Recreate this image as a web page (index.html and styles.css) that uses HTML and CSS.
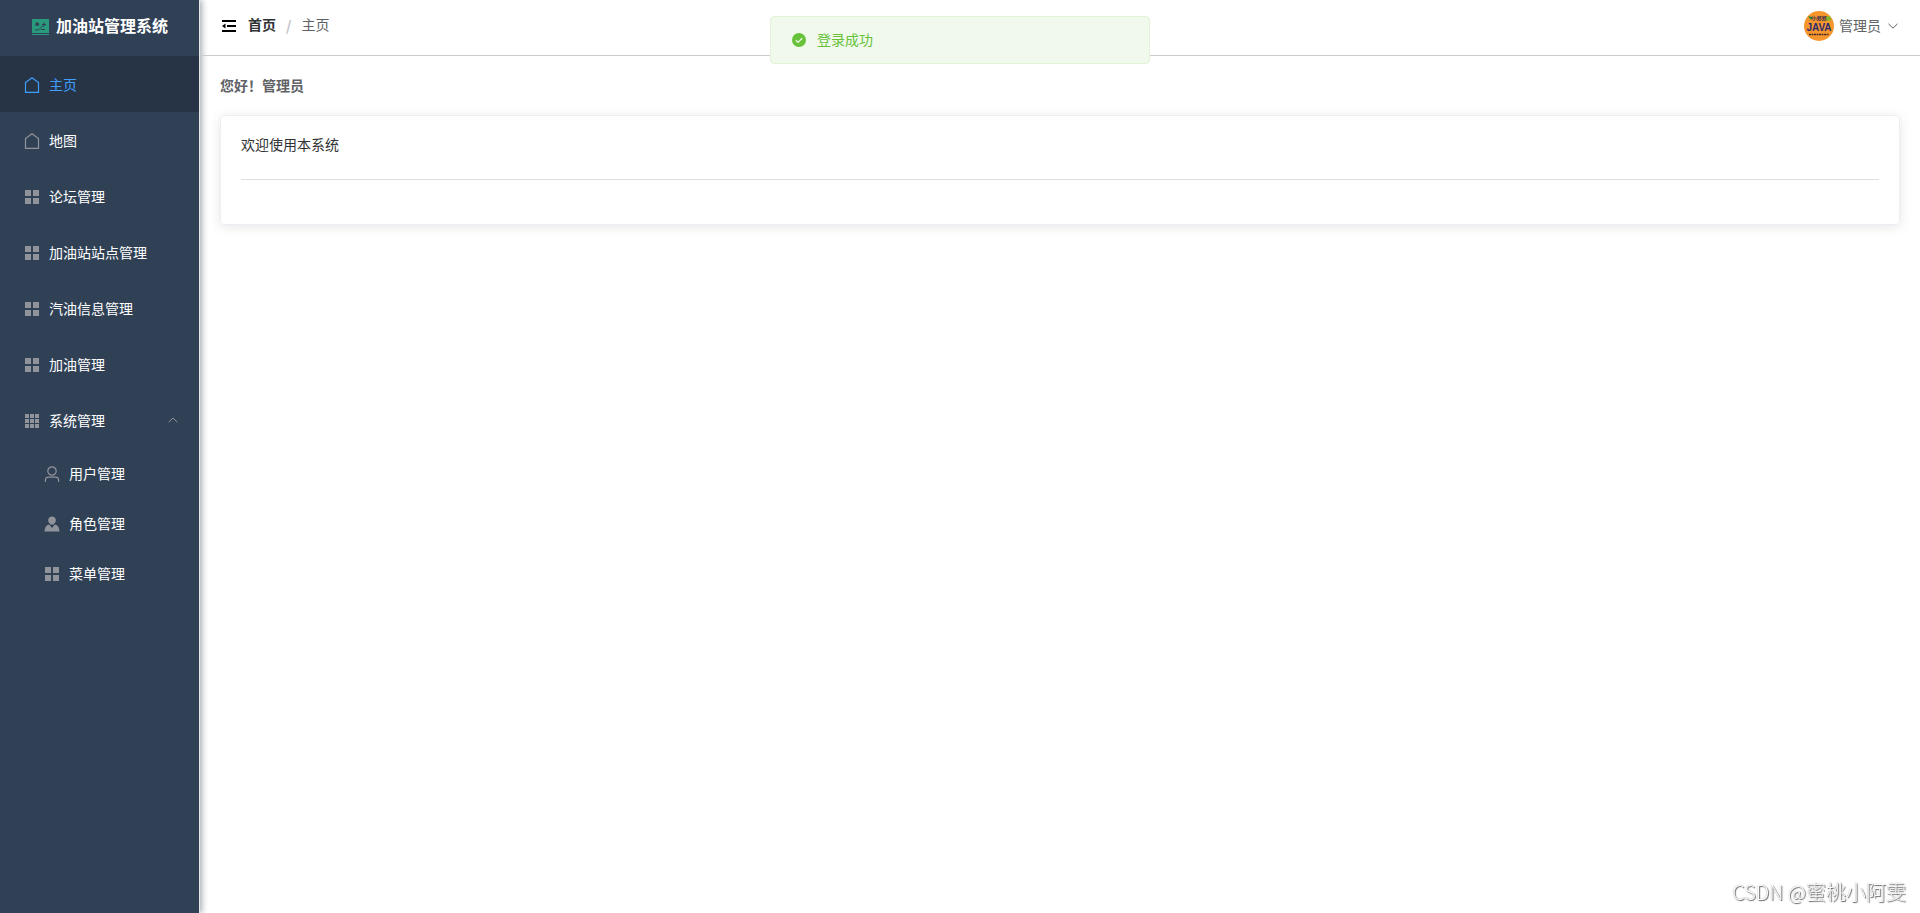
FILE: index.html
```html
<!DOCTYPE html>
<html lang="zh-CN">

<head>
    <meta charset="UTF-8">
    <meta name="viewport" content="width=device-width, initial-scale=1.0">
    <title>加油站管理系统</title>
    <link rel="stylesheet" href="styles.css">
</head>

<body>
    <!-- shared icons -->
    <svg class="icon-defs" aria-hidden="true">
        <symbol id="icon-house" viewBox="0 0 16 16">
            <path d="M1.500 15.400V5.600L8 .800l6.500 4.800v9.800z" fill="none" stroke="currentColor" stroke-width="1.200" />
        </symbol>
        <symbol id="icon-menu" viewBox="0 0 14 14">
            <path d="M0 0h6v6H0zM8 0h6v6H8zM0 8h6v6H0zM8 8h6v6H8z" fill="currentColor" />
        </symbol>
        <symbol id="icon-grid" viewBox="0 0 14 14">
            <path d="M0 0h4v4H0zM5 0h4v4H5zM10 0h4v4h-4zM0 5h4v4H0zM5 5h4v4H5zM10 5h4v4h-4zM0 10h4v4H0zM5 10h4v4H5zM10 10h4v4h-4z" fill="currentColor" />
        </symbol>
        <symbol id="icon-user" viewBox="0 0 16 16">
            <g fill="none" stroke="currentColor" stroke-width="1.200">
                <circle cx="8" cy="5" r="4.200" />
                <path d="M1.400 16v-1.800q0-3 3-3h7.200q3 0 3 3V16" />
            </g>
        </symbol>
        <symbol id="icon-user-solid" viewBox="0 0 16 16">
            <path d="M8 .5a3.900 3.900 0 0 0-2 7.200v.7h4v-.7A3.900 3.900 0 0 0 8 .5zM5.200 8.400C2 9 .6 11.500.5 15.500h15C15.400 11.500 14 9 10.800 8.400L8 12z" fill="currentColor" />
        </symbol>
    </svg>

    <div class="layout">
        <aside class="sidebar">
            <div class="logo">
                <svg class="logo-icon" viewBox="0 0 17 17">
                    <path d="M0 0h17v14H0zM0 15h17v1H0z" fill="#2a9a7c" />
                    <circle cx="5.200" cy="5.200" r="1.900" fill="#304156" />
                    <path d="M3 11h3.500l5-5M9 10.500h4M10 5.500h3.500M11.500 3.500l2 2-2 2" fill="none" stroke="#304156" />
                </svg>
                <span>加油站管理系统</span>
            </div>
            <nav class="menu">
                <a href="#" class="menu-item active"><svg class="icon-tall"><use href="#icon-house" /></svg>主页</a>
                <a href="#" class="menu-item"><svg class="icon-tall"><use href="#icon-house" /></svg>地图</a>
                <a href="#" class="menu-item"><svg><use href="#icon-menu" /></svg>论坛管理</a>
                <a href="#" class="menu-item"><svg><use href="#icon-menu" /></svg>加油站站点管理</a>
                <a href="#" class="menu-item"><svg><use href="#icon-menu" /></svg>汽油信息管理</a>
                <a href="#" class="menu-item"><svg><use href="#icon-menu" /></svg>加油管理</a>
                <button type="button" class="menu-item" aria-expanded="true">
                    <svg><use href="#icon-grid" /></svg>系统管理
                    <svg class="arrow" viewBox="0 0 10 6"><path d="M.7 5.200L5 1l4.300 4.200" fill="none" stroke="currentColor" /></svg>
                </button>
                <div class="submenu">
                    <a href="#" class="menu-item"><svg class="icon-tall"><use href="#icon-user" /></svg>用户管理</a>
                    <a href="#" class="menu-item"><svg class="icon-tall"><use href="#icon-user-solid" /></svg>角色管理</a>
                    <a href="#" class="menu-item"><svg><use href="#icon-menu" /></svg>菜单管理</a>
                </div>
            </nav>
        </aside>

        <div class="container">
            <header class="header">
                <button type="button" class="fold-btn" aria-label="收起菜单">
                    <svg viewBox="0 0 14 12">
                        <path d="M0 0h14v2H0zM5 5h9v2H5zM0 10h14v2H0zM3.500 3.500v5L0 6z" fill="currentColor" />
                    </svg>
                </button>
                <div class="breadcrumb">
                    <a href="#">首页</a>
                    <span class="separator">/</span>
                    <span>主页</span>
                </div>
                <button type="button" class="user">
                    <svg class="avatar" viewBox="0 0 30 30">
                        <circle cx="15" cy="15" r="15" fill="#f7962c" />
                        <path d="M4 5l3 1 2-1-2 4z" fill="#16803c" />
                        <circle cx="24.500" cy="7.500" r="2.500" fill="#8bb52b" />
                        <text x="15" y="9" class="avatar-small">小郑郑</text>
                        <text x="15" y="20" class="avatar-name">JAVA</text>
                        <path d="M5 23.500h20" stroke="#4a2c2c" stroke-width="1.500" stroke-dasharray="2 .5" />
                    </svg>
                    <span>管理员</span>
                    <svg class="chevron" viewBox="0 0 10 6"><path d="M.5.800L5 5.200 9.500.800" fill="none" stroke="currentColor" /></svg>
                </button>
            </header>

            <main class="main">
                <div class="hello">您好！管理员</div>
                <div class="card">
                    <div>欢迎使用本系统</div>
                    <hr>
                </div>
            </main>
        </div>
    </div>

    <div class="message" role="alert">
        <svg viewBox="0 0 14 14">
            <circle cx="7" cy="7" r="7" fill="#67c23a" />
            <path d="M3.800 7.200L6 9.400l4.200-4.200" fill="none" stroke="#f0f9eb" stroke-width="1.300" />
        </svg>
        <span>登录成功</span>
    </div>

    <div class="watermark">CSDN @蜜桃小阿雯</div>
</body>

</html>
```

FILE: styles.css
```css
* {
    box-sizing: border-box;
}

body {
    margin: 0;
    font-family: "Liberation Sans", "Noto Sans CJK SC", sans-serif;
    font-size: 14px;
    line-height: 20px;
    color: #303133;
    background-color: #fff;
}

a {
    color: inherit;
    text-decoration: none;
}

button {
    border: none;
    padding: 0;
    background: none;
    font: inherit;
    color: inherit;
    cursor: pointer;
}

.icon-defs {
    display: none;
}

.layout {
    display: flex;
    min-height: 100vh;
}

/* sidebar */
.sidebar {
    flex: none;
    width: 200px;
    background-color: #304156;
    border-right: 1px solid #e6e6e6;
    box-shadow: 2px 0 6px rgba(0, 21, 41, 0.35);
}

.logo {
    display: flex;
    align-items: center;
    gap: 7px;
    height: 56px;
    padding: 0 0 2px 32px;
    font-size: 16px;
    font-weight: bold;
    color: #fff;
}

.logo-icon {
    width: 17px;
    height: 17px;
}

.menu-item {
    display: flex;
    align-items: center;
    gap: 10px;
    width: 100%;
    height: 56px;
    padding: 2px 21px 0 25px;
    color: #fff;
}

.menu-item svg {
    flex: none;
    width: 14px;
    height: 14px;
    color: #909399;
}

.menu-item .icon-tall {
    width: 16px;
    height: 16px;
    margin: 0 -1px;
}

.menu-item.active {
    background-color: #263445;
    color: #409eff;
}

.menu-item.active svg {
    color: #409eff;
}

.menu-item .arrow {
    width: 10px;
    height: 6px;
    margin-left: auto;
    margin-bottom: 2px;
}

.submenu .menu-item {
    height: 50px;
    padding-left: 45px;
}

/* header */
.container {
    flex: 1;
    min-width: 0;
}

.header {
    display: flex;
    align-items: center;
    height: 56px;
    padding: 0 22px 4px;
    border-bottom: 1px solid #ccc;
}

.fold-btn {
    display: flex;
    margin-right: 12px;
    color: #000;
}

.fold-btn svg {
    width: 14px;
    height: 12px;
}

.breadcrumb {
    display: flex;
    margin-bottom: 2px;
    color: #606266;
}

.breadcrumb a {
    font-weight: bold;
    color: #303133;
}

.separator {
    margin: 0 10px;
    font-family: "Noto Sans CJK SC", sans-serif;
    font-weight: bold;
    color: #c0c4cc;
}

.user {
    display: flex;
    align-items: center;
    gap: 5px;
    margin-left: auto;
    color: #606266;
}

.avatar {
    width: 30px;
    height: 30px;
}

.avatar-small {
    font-size: 5px;
    font-weight: bold;
    text-anchor: middle;
    fill: #2b2b4f;
}

.avatar-name {
    font-size: 10px;
    font-weight: bold;
    text-anchor: middle;
    fill: #2d2a6e;
}

.chevron {
    width: 10px;
    height: 6px;
    margin-left: 2px;
}

/* content */
.main {
    padding: 20px;
}

.hello {
    margin-bottom: 19px;
    font-weight: bold;
    color: #606266;
}

.card {
    padding: 20px;
    line-height: 19px;
    border: 1px solid #ebeef5;
    border-radius: 4px;
    box-shadow: 0 2px 12px rgba(0, 0, 0, 0.1);
}

.card hr {
    height: 1px;
    margin: 24px 0;
    border: none;
    background-color: #dcdfe6;
}

/* login message */
.message {
    position: fixed;
    top: 16px;
    left: 50%;
    display: flex;
    align-items: center;
    gap: 11px;
    width: 380px;
    height: 48px;
    padding: 0 21px;
    transform: translateX(-50%);
    border: 1px solid #e1f3d8;
    border-radius: 4px;
    background-color: #f0f9eb;
    color: #67c23a;
}

.message svg {
    width: 14px;
    height: 14px;
}

.watermark {
    position: fixed;
    right: 14px;
    bottom: 9px;
    font-family: "Noto Sans CJK SC", sans-serif;
    font-size: 20px;
    font-weight: 300;
    line-height: 24px;
    color: #fff;
    text-shadow: 1px 1px 1px #666, 0 0 1px #888;
}
```
